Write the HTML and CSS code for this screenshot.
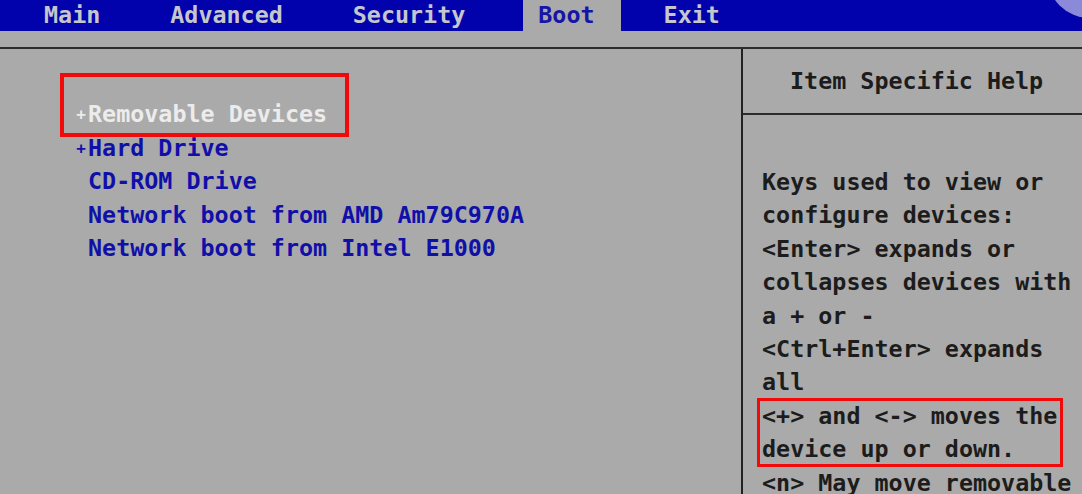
FILE: index.html
```html
<!DOCTYPE html>
<html lang="en">
<head>
  <meta charset="UTF-8">
  <meta name="viewport" content="width=device-width, initial-scale=1.0">
  <title>BIOS Setup Utility - Boot</title>
  <link rel="stylesheet" href="styles.css">
</head>
<body>
  <nav class="menubar">
    <span class="tab">Main</span>
    <span class="tab">Advanced</span>
    <span class="tab">Security</span>
    <span class="tab active">Boot</span>
    <span class="tab">Exit</span>
  </nav>
  <span class="corner-dot"></span>

  <div class="screen">
    <ul class="boot-list">
      <li class="selected marked"><span class="exp">+</span>Removable Devices</li>
      <li><span class="exp">+</span>Hard Drive</li>
      <li><span class="exp"></span>CD-ROM Drive</li>
      <li><span class="exp"></span>Network boot from AMD Am79C970A</li>
      <li><span class="exp"></span>Network boot from Intel E1000</li>
    </ul>

    <aside class="help">
      <div class="help-title">Item Specific Help</div>
      <div class="help-body">
        <p>Keys used to view or configure devices:</p>
        <p>&lt;Enter&gt; expands or collapses devices with a + or -</p>
        <p>&lt;Ctrl+Enter&gt; expands all</p>
        <p class="marked">&lt;+&gt; and &lt;-&gt; moves the device up or down.</p>
        <p>&lt;n&gt; May move removable device between Hard Disk or Removable Disk</p>
      </div>
    </aside>
  </div>
</body>
</html>
```

FILE: styles.css
```css
* {
  margin: 0;
  padding: 0;
  box-sizing: border-box;
}

html, body {
  height: 494px;
  overflow: hidden;
}

body {
  position: relative;
  background: #aaaaaa;
  font-family: 'DejaVu Sans Mono', 'Liberation Mono', monospace;
  font-size: 23.36px;
  font-weight: bold;
  color: #1c1c1c;
}

.menubar {
  display: flex;
  gap: 28px;
  height: 31px;
  padding-left: 29px;
  background: #0202ac;
}

.tab {
  padding: 0 27px 0 15px;
  line-height: 31px;
  color: #c6c6ce;
  white-space: pre;
}

.tab.active {
  margin-left: 3px;
  padding-right: 26px;
  background: #aaaaaa;
  color: #1515a6;
}

.corner-dot {
  position: absolute;
  top: -68px;
  left: 1047px;
  width: 86px;
  height: 86px;
  border-radius: 50%;
  background: #8a8ad8;
}

.screen {
  display: flex;
  margin-top: 16px;
  height: 447px;
  border-top: 2px solid #2c2c2c;
}

/* boot order list */
.boot-list {
  flex-shrink: 0;
  width: 743px;
  border-right: 2px solid #222222;
  list-style: none;
  padding: 49px 0 0 74px;
}

.boot-list li {
  line-height: 33.5px;
  color: #1010a8;
  white-space: pre;
}

.boot-list li.selected {
  color: #ececec;
}

.exp {
  display: inline-block;
  width: 14.06px;
  font-size: 16px;
  text-align: center;
  vertical-align: top;
}

.boot-list li.marked {
  position: relative;
  display: inline-block;
}

.boot-list li.marked::after {
  content: '';
  position: absolute;
  top: -25px;
  right: -22px;
  bottom: -5px;
  left: -14px;
  border: 4px solid #f00a0a;
}

/* help panel */
.help {
  flex: 1;
  min-width: 0;
}

.help-title {
  height: 66px;
  padding: 16px 0 0 47px;
  line-height: 33.4px;
  border-bottom: 2px solid #2c2c2c;
}

.help-body {
  padding: 51px 0 0 19px;
}

.help-body p {
  width: 22ch;
  line-height: 33.4px;
}

.help-body p.marked {
  position: relative;
}

.help-body p.marked::after {
  content: '';
  position: absolute;
  top: -2px;
  right: 8px;
  bottom: 0;
  left: -5px;
  border: 3px solid #f00a0a;
}
```
